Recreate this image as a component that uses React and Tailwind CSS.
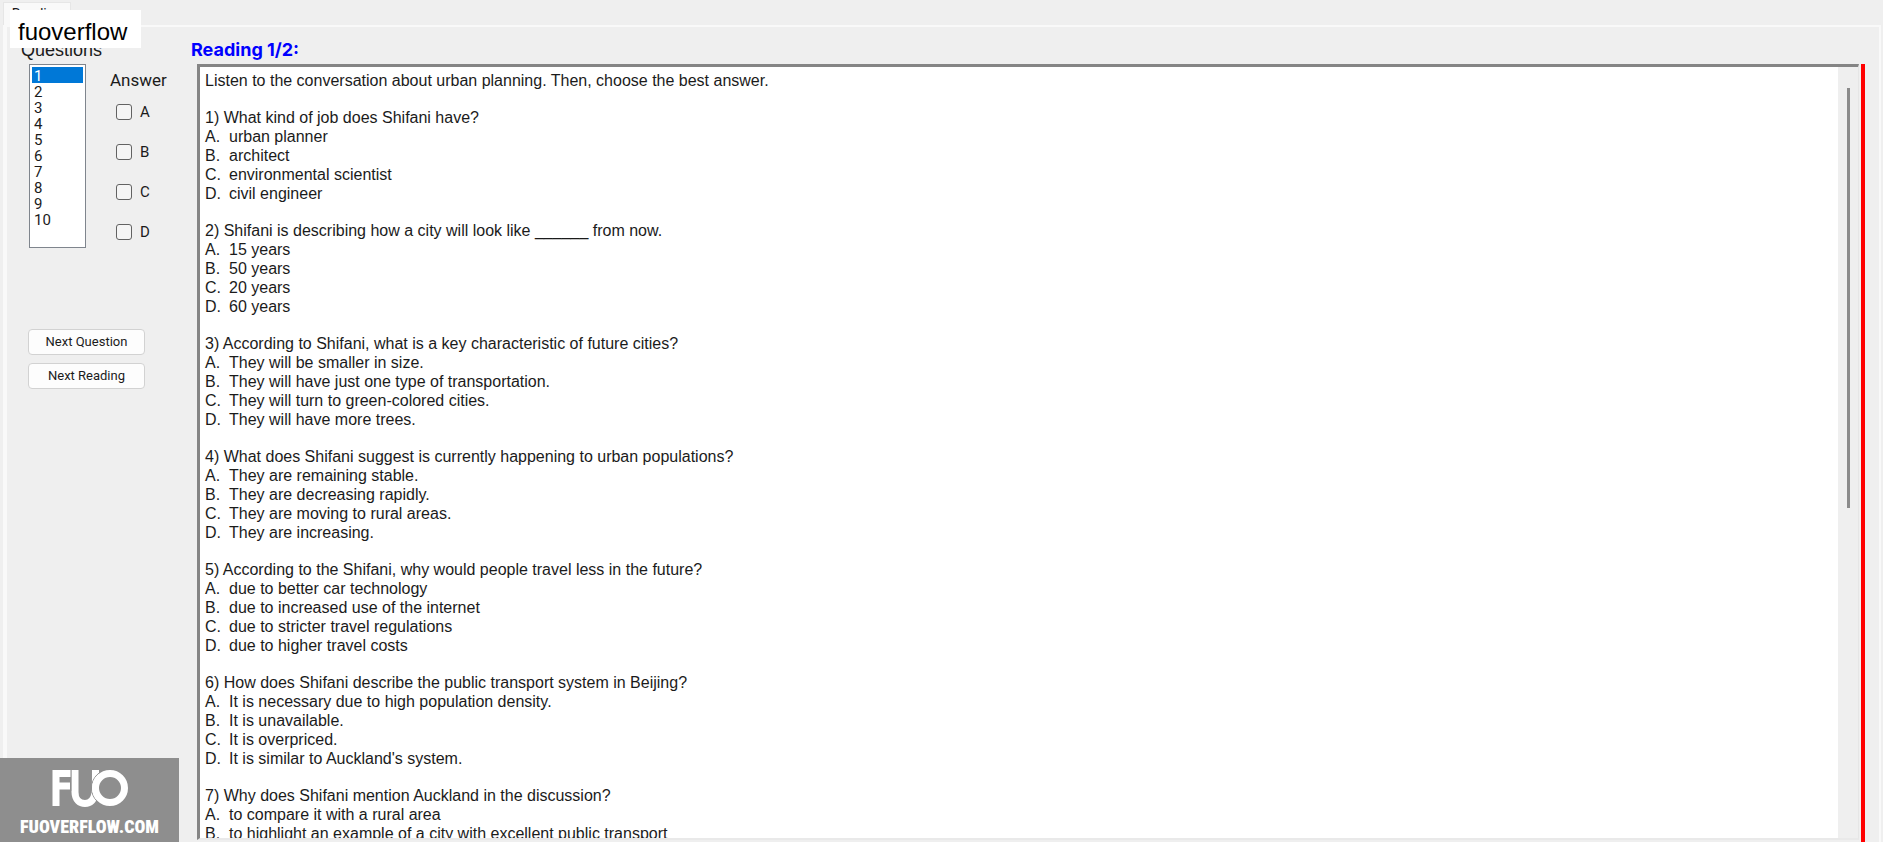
import React, { useState } from "react";

const readings = {
  title: "Reading 1/2:",
  intro:
    "Listen to the conversation about urban planning. Then, choose the best answer.",
  questions: [
    {
      text: "What kind of job does Shifani have?",
      options: [
        "urban planner",
        "architect",
        "environmental scientist",
        "civil engineer",
      ],
    },
    {
      text: "Shifani is describing how a city will look like ______ from now.",
      options: ["15 years", "50 years", "20 years", "60 years"],
    },
    {
      text: "According to Shifani, what is a key characteristic of future cities?",
      options: [
        "They will be smaller in size.",
        "They will have just one type of transportation.",
        "They will turn to green-colored cities.",
        "They will have more trees.",
      ],
    },
    {
      text: "What does Shifani suggest is currently happening to urban populations?",
      options: [
        "They are remaining stable.",
        "They are decreasing rapidly.",
        "They are moving to rural areas.",
        "They are increasing.",
      ],
    },
    {
      text: "According to the Shifani, why would people travel less in the future?",
      options: [
        "due to better car technology",
        "due to increased use of the internet",
        "due to stricter travel regulations",
        "due to higher travel costs",
      ],
    },
    {
      text: "How does Shifani describe the public transport system in Beijing?",
      options: [
        "It is necessary due to high population density.",
        "It is unavailable.",
        "It is overpriced.",
        "It is similar to Auckland's system.",
      ],
    },
    {
      text: "Why does Shifani mention Auckland in the discussion?",
      options: [
        "to compare it with a rural area",
        "to highlight an example of a city with excellent public transport",
      ],
    },
  ],
};

const letters = ["A", "B", "C", "D"];

const Logo = () => (
  <svg width="80" height="38" viewBox="0 0 80 38" fill="none" aria-hidden="true">
    <path d="M6 37V4.500H20.500M6 17H20" stroke="#fff" strokeWidth="7" />
    <path
      d="M25 1V23C25 31 30 34.500 35 34.500C41 34.500 44 30 45 24C45.500 20 45.500 12 45.500 1"
      stroke="#fff"
      strokeWidth="7"
    />
    <path d="M21.500 1V22" stroke="#b5b5b5" strokeWidth="1" />
    <circle cx="60" cy="19" r="18.500" stroke="#8e8e8e" strokeWidth="1" />
    <circle cx="60" cy="19" r="14.500" fill="#8e8e8e" stroke="#fff" strokeWidth="7" />
  </svg>
);

const Watermark = () => (
  <div className="absolute bottom-0 left-0 z-10 flex w-[179px] h-[84px] flex-col items-center bg-[#8e8e8e] pt-[11px]">
    <Logo />
    <span className="mt-2 font-['Roboto_Condensed','Roboto',sans-serif] text-lg leading-6 font-black text-white">
      FUOVERFLOW.COM
    </span>
  </div>
);

const AnswerOption = ({ letter, checked, onChange }) => (
  <label className="flex items-center gap-2 h-4 text-[15px]">
    <input
      type="checkbox"
      checked={checked}
      onChange={onChange}
      className="size-4 appearance-none rounded-[3px] border border-[#626262] bg-[#f5f5f5] checked:bg-[#0078d7]"
    />
    {letter}
  </label>
);

const Question = ({ number, question }) => (
  <div className="mt-[18px]">
    <p>
      {number}) {question.text}
    </p>
    {question.options.map((option, i) => (
      <p key={option} className="flex">
        <span className="w-6">{letters[i]}.</span>
        {option}
      </p>
    ))}
  </div>
);

export default function App() {
  const [current, setCurrent] = useState(1);
  const [answers, setAnswers] = useState({});

  const toggleAnswer = (letter) => {
    const key = `${current}-${letter}`;
    setAnswers((prev) => ({ ...prev, [key]: !prev[key] }));
  };

  return (
    <div className="relative flex h-screen flex-col overflow-hidden bg-[#efefef] pl-[3px] font-['Roboto','Liberation_Sans',sans-serif] text-base text-[#1b1b1b]">
      <div className="flex h-[25px] shrink-0 pt-0.5">
        <button className="w-[68px] border border-[#e6e6e6] border-b-0 bg-[#f9f9f9] text-sm leading-4">
          Reading
        </button>
      </div>
      <div className="absolute top-[10px] left-[10px] z-10 w-[131px] h-[38px] bg-white pl-2 font-['Liberation_Sans',sans-serif] text-2xl leading-[43px] text-black">
        fuoverflow
      </div>

      <main className="mr-0.5 flex min-h-0 flex-1 border-2 border-b-0 border-[#f9f9f9] border-l-4">
        <aside className="w-[184px] shrink-0 pt-[11px] pl-[22px]">
          <label
            htmlFor="questions"
            className="-ml-2 block h-[26px] font-['Liberation_Sans',sans-serif] text-lg leading-6"
          >
            Questions
          </label>
          <div className="flex gap-6">
            <select
              id="questions"
              size={10}
              value={current}
              onChange={(e) => setCurrent(Number(e.target.value))}
              className="w-[57px] h-[184px] overflow-hidden border border-[#7f858d] bg-white p-0.5 text-[15px] leading-4"
            >
              {Array.from({ length: 10 }, (_, i) => i + 1).map((n) => (
                <option
                  key={n}
                  value={n}
                  className="min-h-4 h-4 p-0 pl-0.5 leading-4 checked:bg-[linear-gradient(#0078d7,#0078d7)] checked:[-webkit-text-fill-color:white]"
                >
                  {n}
                </option>
              ))}
            </select>
            <fieldset>
              <legend className="pt-1 text-[17px] leading-6">Answer</legend>
              <div className="mt-3 ml-1.5 flex flex-col gap-6">
                {letters.map((letter) => (
                  <AnswerOption
                    key={letter}
                    letter={letter}
                    checked={!!answers[`${current}-${letter}`]}
                    onChange={() => toggleAnswer(letter)}
                  />
                ))}
              </div>
            </fieldset>
          </div>
          <div className="mt-[81px] -ml-px flex w-[117px] flex-col gap-2 text-[13px]">
            <button
              onClick={() => setCurrent((n) => (n % 10) + 1)}
              className="h-[26px] rounded border border-[#d2d2d2] bg-[#fdfdfd]"
            >
              Next Question
            </button>
            <button className="h-[26px] rounded border border-[#d2d2d2] bg-[#fdfdfd]">
              Next Reading
            </button>
          </div>
        </aside>

        <section className="flex min-w-0 flex-1 flex-col pt-3">
          <h1 className="h-[25px] font-['Inter',sans-serif] text-lg leading-[22px] font-bold text-[#0000ff]">
            {readings.title}
          </h1>
          <div className="flex min-h-0 flex-1">
            <div className="mb-0.5 ml-[6px] flex min-w-0 flex-1 border-t-3 border-l-3 border-r border-b-2 border-t-[#858585] border-l-[#858585] border-r-[#e6e6e6] border-b-[#e9e9e9] bg-white">
              <div className="min-w-0 flex-1 overflow-hidden pt-1 pl-[5px] font-['Liberation_Sans',sans-serif] leading-[19px]">
                <p>{readings.intro}</p>
                {readings.questions.map((question, i) => (
                  <Question key={i} number={i + 1} question={question} />
                ))}
              </div>
              <div className="flex w-5 justify-center bg-[#efefef] pt-[21px]">
                <div className="h-[420px] w-[3px] bg-[#8b8b8b]" />
              </div>
            </div>
            <div className="mr-3.5 ml-0.5 w-1 bg-[#ff0000]" />
          </div>
        </section>
      </main>

      <Watermark />
    </div>
  );
}
